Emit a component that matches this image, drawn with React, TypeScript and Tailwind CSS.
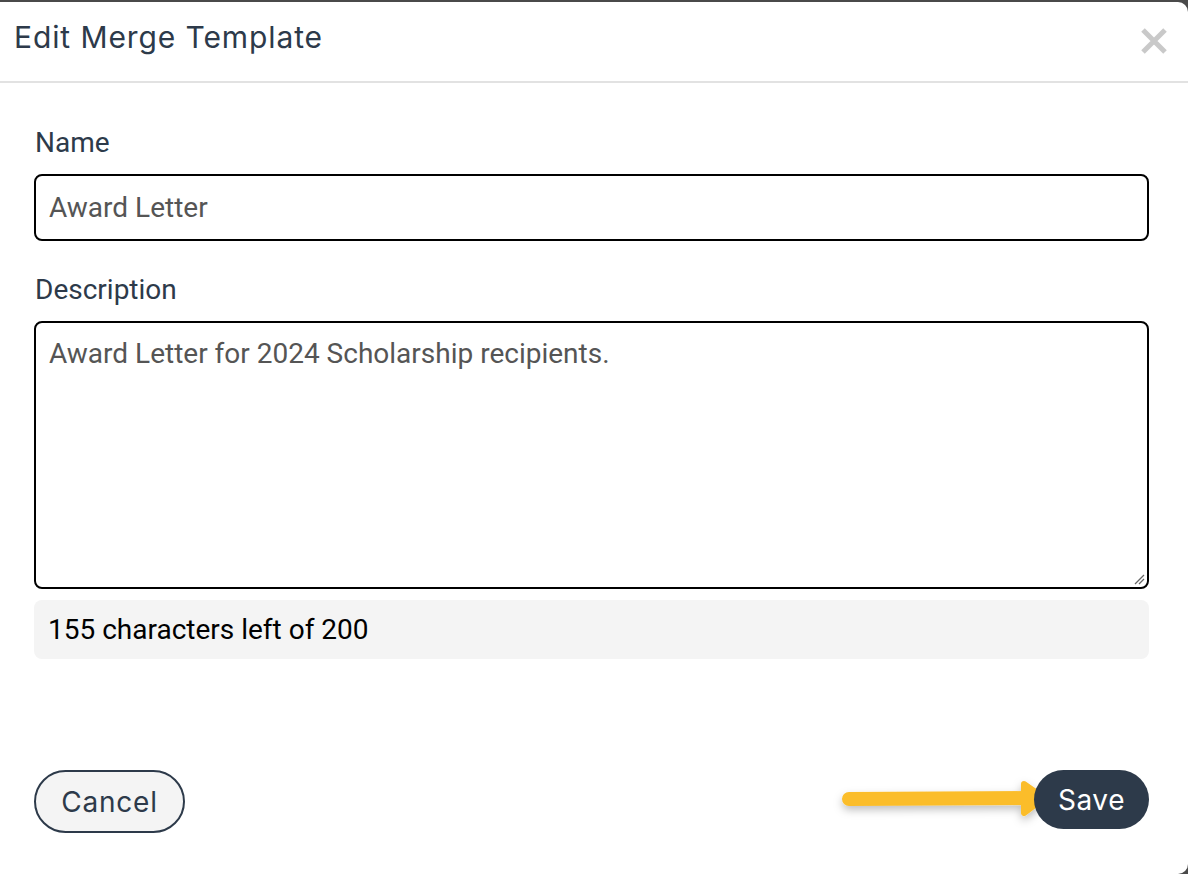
import React from 'react'

const headFont = { fontFamily: 'Inter, "Open Sans", sans-serif' }

export default function App() {
  return (
    <div className="w-[1188px] h-[874px] bg-[#4a4a4a] pt-[2px] overflow-hidden" style={{ fontFamily: 'Roboto, "Liberation Sans", sans-serif' }}>
      <div className="h-[872px] bg-white rounded-tr-[10px] rounded-br-[10px] flex flex-col">
        {/* header */}
        <div className="h-[81px] flex items-center justify-between pl-[14px] pr-[20px] border-b-2 border-[#e2e2e2] shrink-0">
          <h1 className="text-[30px] text-[#2d3a4a] leading-none -mt-[10px] tracking-[0.9px]" style={headFont}>Edit Merge Template</h1>
          <svg width="28" height="28" viewBox="0 0 28 28" className="-mt-[2px]">
            <path d="M3 3 L25 25 M25 3 L3 25" stroke="#c9c9c9" strokeWidth="5" strokeLinecap="butt" />
          </svg>
        </div>

        {/* body */}
        <div className="flex-1 flex flex-col pl-[34px] pr-[39px] pt-[46px]">
          <label className="text-[28px] text-[#2d3a4a] leading-none mb-[17px] pl-[1px]">Name</label>
          <div className="h-[67px] border-2 border-black rounded-[8px] flex items-center px-[13px]">
            <span className="text-[28px] text-[#555] leading-none">Award Letter</span>
          </div>

          <label className="text-[28px] text-[#2d3a4a] leading-none mt-[35px] mb-[17px] pl-[1px]">Description</label>
          <div className="relative h-[268px] border-2 border-black rounded-[8px] px-[13px] pt-[17px]">
            <span className="block text-[28px] text-[#555] leading-none">Award Letter for 2024 Scholarship recipients.</span>
            <svg width="12" height="12" viewBox="0 0 12 12" className="absolute right-[2px] bottom-[2px]">
              <path d="M11 2 L2 11 M11 6 L6 11" stroke="#666" strokeWidth="1.3" />
            </svg>
          </div>

          <div className="mt-[11px] h-[59px] bg-[#f4f4f4] rounded-[8px] flex items-center px-[14px]">
            <span className="text-[28px] text-black leading-none">155 characters left of 200</span>
          </div>

          {/* footer */}
          <div className="mt-auto mb-[41px] flex items-start justify-between">
            <button className="w-[151px] h-[63px] rounded-full border-2 border-[#2d3a4a] bg-[#f4f4f4] text-[28px] text-[#2d3a4a] tracking-[0.8px]" style={headFont}>
              Cancel
            </button>
            <div className="relative">
              <svg width="230" height="60" viewBox="0 0 230 60" className="absolute left-[-206px] top-0 overflow-visible">
                <defs>
                  <filter id="sh" x="-20%" y="-50%" width="140%" height="200%">
                    <feDropShadow dx="0" dy="4" stdDeviation="4" floodColor="#000" floodOpacity="0.25" />
                  </filter>
                </defs>
                <g filter="url(#sh)">
                  <path d="M21 29 L200 28" stroke="#fbbd2b" strokeWidth="14" strokeLinecap="round" />
                  <path d="M196 14 L216 28 L196 43 Z" fill="#fbbd2b" stroke="#fbbd2b" strokeWidth="6" strokeLinejoin="round" />
                </g>
              </svg>
              <button className="relative w-[115px] h-[59px] rounded-full bg-[#2d3a4a] text-white text-[28px] tracking-[0.6px]" style={headFont}>
                Save
              </button>
            </div>
          </div>
        </div>
      </div>
    </div>
  )
}
